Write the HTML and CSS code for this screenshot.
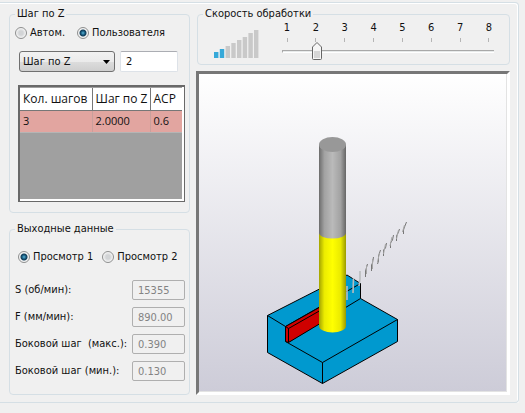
FILE: index.html
```html
<!DOCTYPE html>
<html lang="ru">
<head>
    <meta charset="UTF-8">
    <meta name="viewport" content="width=device-width, initial-scale=1.0">
    <title>Скорость обработки</title>
    <link rel="stylesheet" href="styles.css">
</head>
<body>
    <main class="panel">
        <div class="side">
            <fieldset class="group step">
                <legend>Шаг по Z</legend>
                <div class="radios">
                    <label><input type="radio" name="mode"> Автом.</label>
                    <label><input type="radio" name="mode" checked> Пользователя</label>
                </div>
                <div class="step-row">
                    <select class="combo" aria-label="Параметр">
                        <option>Шаг по Z</option>
                    </select>
                    <input class="step-value" type="text" value="2" aria-label="Значение шага">
                </div>
                <div class="grid-box">
                    <table class="grid">
                        <thead>
                            <tr>
                                <th class="col-count">Кол. шагов</th>
                                <th class="col-step">Шаг по Z</th>
                                <th>ACP</th>
                            </tr>
                        </thead>
                        <tbody>
                            <tr>
                                <td>3</td>
                                <td>2.0000</td>
                                <td>0.6</td>
                            </tr>
                        </tbody>
                    </table>
                </div>
            </fieldset>

            <fieldset class="group output">
                <legend>Выходные данные</legend>
                <div class="radios">
                    <label><input type="radio" name="view" checked> Просмотр 1</label>
                    <label><input type="radio" name="view"> Просмотр 2</label>
                </div>
                <div class="fields">
                    <label for="spindle">S (об/мин):</label>
                    <input id="spindle" type="text" value="15355" disabled>
                    <label for="feed">F (мм/мин):</label>
                    <input id="feed" type="text" value="890.00" disabled>
                    <label for="stepMax">Боковой шаг&nbsp; (макс.):</label>
                    <input id="stepMax" type="text" value="0.390" disabled>
                    <label for="stepMin">Боковой шаг (мин.):</label>
                    <input id="stepMin" type="text" value="0.130" disabled>
                </div>
            </fieldset>
        </div>

        <div class="main">
            <fieldset class="group speed">
                <legend>Скорость обработки</legend>
                <svg class="bars" width="46" height="28" viewBox="0 0 46 28" aria-hidden="true">
                    <g fill="#36a9d9">
                        <rect x="0" y="22" width="4.4" height="6"/>
                        <rect x="5.8" y="19" width="4.4" height="9"/>
                    </g>
                    <g fill="#c9c9c9">
                        <rect x="11.6" y="16" width="4.4" height="12"/>
                        <rect x="17.3" y="13" width="4.4" height="15"/>
                        <rect x="23" y="10" width="4.4" height="18"/>
                        <rect x="28.7" y="7" width="4.4" height="21"/>
                        <rect x="34.4" y="3" width="4.4" height="25"/>
                        <rect x="40" y="0" width="4.4" height="28"/>
                    </g>
                </svg>
                <div class="scale">
                    <div class="marks">
                        <span>1</span><span>2</span><span>3</span><span>4</span>
                        <span>5</span><span>6</span><span>7</span><span>8</span>
                    </div>
                    <input class="slider" type="range" min="1" max="8" value="2" aria-label="Скорость обработки">
                </div>
            </fieldset>

            <div class="view">
                <svg class="scene" viewBox="0 0 308 318" role="img" aria-label="Фреза и заготовка">
                    <defs>
                        <linearGradient id="shank">
                            <stop offset="0" stop-color="#6c6c6c"/>
                            <stop offset="0.2" stop-color="#a2a2a2"/>
                            <stop offset="0.5" stop-color="#bababa"/>
                            <stop offset="0.8" stop-color="#a2a2a2"/>
                            <stop offset="1" stop-color="#666"/>
                        </linearGradient>
                        <linearGradient id="cutter">
                            <stop offset="0" stop-color="#a3a300"/>
                            <stop offset="0.2" stop-color="#ecec00"/>
                            <stop offset="0.5" stop-color="#ffff00"/>
                            <stop offset="0.8" stop-color="#eaea00"/>
                            <stop offset="1" stop-color="#9a9a00"/>
                        </linearGradient>
                    </defs>
                    <!-- заготовка -->
                    <g stroke="#000" stroke-width="1" stroke-linejoin="round" fill="#0099cf">
                        <path d="M68.5 241.5L148 201L161.5 209.5V224.5L198.5 245.5V267.5L123.5 309.5L68.5 278.5Z"/>
                        <path fill="none" d="M68.5 241.5L86.5 252.5L161.5 209.5M86.5 267.5L123.5 288.5L198.5 245.5M123.5 288.5V309.5M89.5 268L161.5 224.5"/>
                        <path fill="#cf0000" d="M86.5 252.5L122 232.5V249L89.5 268.5L86.5 267.5Z"/>
                        <path fill="none" d="M86.5 252.5L89.5 254.5V268.5M89.5 254.5L122 236"/>
                    </g>
                    <!-- фреза -->
                    <path fill="url(#cutter)" d="M120 158V252A13.5 6.5 0 0 0 147 252V158Z"/>
                    <path fill="url(#shank)" d="M120 71V159A13.5 5.5 0 0 0 147 159V71Z"/>
                    <ellipse cx="133.5" cy="70.5" rx="13.5" ry="7.5" fill="#989898"/>
                    <!-- траектория -->
                    <g fill="none" stroke="#b9bcbd" stroke-width="1.6">
                        <path d="M148 212V226M154.5 204L154 219M161 197V205L160 212"/>
                    </g>
                    <g fill="none" stroke="#777" stroke-width="1">
                        <path d="M168.5 190L166.5 197V203M174.5 183L173.5 189L172.5 191V197M181.5 176L179.5 182V187L178.5 190M187.5 169L186.5 174L184.5 176V182M194.5 161L193.5 166L191.5 169V174M200.5 155L199.5 158L197.5 162V167M207.5 148L205.5 153L204.5 156V160"/>
                    </g>
                    <g fill="none" stroke="#a5a5a5" stroke-width="1">
                        <path d="M167.5 191V200M173.5 185V195M180.5 179L178.5 188M186.5 170L184.5 180M193 163L191 172M199.5 156L197.5 165M205.5 151L203.5 158"/>
                    </g>
                </svg>
            </div>
        </div>
    </main>
</body>
</html>
```

FILE: styles.css
```css
* {
    box-sizing: border-box;
}

body {
    margin: 0;
    background-color: #f0f0f0;
    color: #111;
    font-family: "DejaVu Sans Condensed", "DejaVu Sans", Tahoma, sans-serif;
    font-size: 11px;
    line-height: 14px;
}

input, select {
    font: inherit;
    color: inherit;
    margin: 0;
}

.panel {
    display: flex;
    gap: 7px;
    margin: 2px 6px 0 0;
    padding: 4px 8px 7px 9px;
    border: 1px solid #d5dfe5;
    border-left: none;
    border-radius: 0 4px 4px 0;
    box-shadow: inset -1px 1px #fff, 0 1px #fff;
}

/* group boxes */
.group {
    min-width: 0;
    margin: 0;
    border: 1px solid #d5dfe5;
    border-radius: 4px;
}

.group legend {
    padding: 0 2px;
}

.side {
    flex: 0 0 181px;
    min-width: 0;
    display: flex;
    flex-direction: column;
    gap: 9px;
}

.step {
    padding: 5px 4px 10px 5px;
}

.output {
    padding: 14px 4px 13px 5px;
}

/* radio buttons */
.radios {
    display: flex;
    gap: 12px;
}

.radios label {
    display: flex;
    align-items: center;
    gap: 3px;
    white-space: nowrap;
}

.radios input {
    appearance: none;
    width: 12px;
    height: 12px;
    border: 1px solid #8e8f8f;
    border-radius: 50%;
    background: radial-gradient(circle, #d2d4d6 30%, #f6f6f6 70%);
}

.radios input:checked {
    background: radial-gradient(circle, #5ab6d8 0, #16577c 2px, #123d58 3px, #f4f4f4 4px);
}

.step-row {
    display: flex;
    gap: 5px;
    margin: 11px 7px 13px 4px;
}

.combo {
    appearance: none;
    width: 96px;
    height: 21px;
    padding: 0 3px;
    border: 1px solid #707070;
    border-radius: 3px;
    background-image: url("data:image/svg+xml,%3Csvg xmlns='http://www.w3.org/2000/svg' width='7' height='4'%3E%3Cpath d='M0 0h7L3.5 4z'/%3E%3C/svg%3E"),
        linear-gradient(#f2f2f2, #ebebeb 50%, #dddddd 50%, #cfcfcf);
    background-repeat: no-repeat;
    background-position: right 4px center, 0 0;
}

.step-value {
    flex: 1;
    width: 0;
    min-width: 0;
    height: 21px;
    padding: 0 5px;
    border: 1px solid #dde2e8;
    border-top-color: #abadb3;
    border-radius: 2px;
    background-color: #fff;
}

/* step table */
.grid-box {
    height: 117px;
    margin: 0 0 0 3px;
    padding: 1px 2px 2px 0;
    border: 1px solid #696969;
    border-left-width: 2px;
    border-top-width: 2px;
    background-color: #a0a0a0;
    box-shadow: inset -2px -2px #fff;
}

.grid {
    width: 100%;
    border-collapse: collapse;
    table-layout: fixed;
}

.grid th, .grid td {
    height: 22px;
    padding: 0 3px;
    text-align: left;
    font-family: "Open Sans", sans-serif;
    font-weight: normal;
    line-height: 12px;
    white-space: nowrap;
}

.grid th {
    padding-right: 0;
    background-color: #fff;
    border-right: 1px solid #777;
    border-bottom: 1px solid #777;
    font-size: 12px;
}

.grid td {
    background-color: #e2a5a0;
    border-right: 1px solid #c9a09c;
    border-bottom: 1px solid #b5b5b5;
}

.grid th:last-child, .grid td:last-child {
    border-right: none;
}

.col-count {
    width: 72px;
}

.col-step {
    width: 58px;
}

/* output values */
.output .radios {
    gap: 9px;
    margin-left: 3px;
}

.fields {
    display: grid;
    grid-template-columns: 1fr 53px;
    row-gap: 7px;
    align-items: center;
    margin-top: 16px;
}

.fields label {
    white-space: nowrap;
}

.fields input {
    width: 100%;
    height: 20px;
    padding: 0 5px;
    border: 1px solid #afafaf;
    border-radius: 2px;
    background-color: #f0f0f0;
    color: #838383;
}

/* speed */
.main {
    flex: 1;
    min-width: 0;
    display: flex;
    flex-direction: column;
    gap: 6px;
}

.speed {
    display: flex;
    align-items: flex-start;
    gap: 22px;
    padding: 0 15px 4px 5px;
}

.speed .bars {
    flex: none;
    margin: 9px 0 0 11px;
}

.scale {
    flex: 1;
    min-width: 0;
}

.marks {
    display: flex;
    justify-content: space-between;
}

.marks span {
    width: 10px;
    text-align: center;
}

.marks span::after {
    content: "";
    display: block;
    width: 1px;
    height: 4px;
    margin: 3px auto 0;
    background-color: #b5b5b5;
}

.slider {
    appearance: none;
    display: block;
    width: 100%;
    height: 18px;
    background: none;
}

.slider::-webkit-slider-runnable-track {
    height: 3px;
    border-top: 1px solid #a8a8a8;
    border-left: 1px solid #a8a8a8;
    border-bottom: 1px solid #fff;
    background-color: #e7eaea;
}

.slider::-webkit-slider-thumb {
    appearance: none;
    width: 10px;
    height: 18px;
    margin-top: -9px;
    border: none;
    background: url("data:image/svg+xml,%3Csvg xmlns='http://www.w3.org/2000/svg' width='10' height='18'%3E%3Cpath d='M.5 5L5 .5 9.5 5V16.5Q9.5 17.5 8.5 17.5H1.5Q.5 17.5 .5 16.5Z' fill='%23f6f6f6' stroke='%23666'/%3E%3Cpath d='M2 9h6v7H2z' fill='%23d6d6d6'/%3E%3C/svg%3E") no-repeat;
}

/* tool preview */
.view {
    margin-left: -1px;
    border: 3px solid;
    border-color: #777 #fff #fff #777;
    background: linear-gradient(#fff, #cdccd8);
    background-clip: padding-box;
    box-shadow: inset -1px -1px #e3e3e3;
}

.scene {
    display: block;
    width: 100%;
}
```
